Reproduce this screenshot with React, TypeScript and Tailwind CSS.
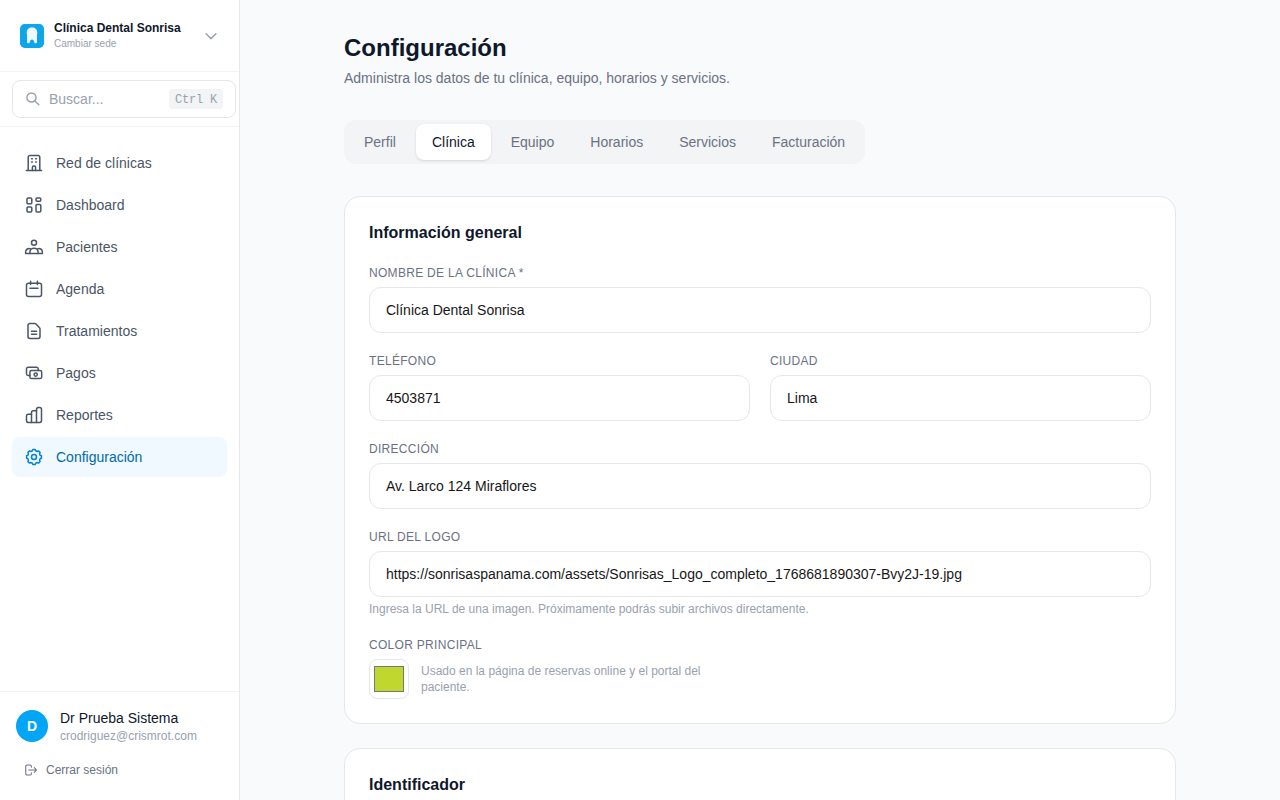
import React from "react";

type IconProps = { className?: string; children: React.ReactNode };

const Icon: React.FC<IconProps> = ({ className = "w-5 h-5", children }) => (
  <svg
    className={`${className} shrink-0`}
    viewBox="0 0 20 20"
    fill="none"
    stroke="currentColor"
    strokeWidth="1.5"
    strokeLinecap="round"
    strokeLinejoin="round"
  >
    {children}
  </svg>
);

const navItems = [
  {
    label: "Red de clínicas",
    icon: (
      <>
        <path d="M2.4 17.4h15.2M4.2 17.4V4.2a1.7 1.7 0 0 1 1.7-1.7h8.2a1.7 1.7 0 0 1 1.7 1.7v13.2" />
        <path d="M8.4 17.4v-3c0-.8.5-1.3 1.2-1.3h.8c.7 0 1.2.5 1.2 1.3v3" />
        <path d="M7.6 5.7h.8M11.6 5.7h.8M7.6 9.1h.8M11.6 9.1h.8" />
      </>
    ),
  },
  {
    label: "Dashboard",
    icon: (
      <>
        <rect x="3" y="2.9" width="4.8" height="5.9" rx="1.1" />
        <rect x="12" y="2.9" width="4.8" height="3.3" rx="1.1" />
        <rect x="3" y="12" width="4.8" height="4.9" rx="1.1" />
        <rect x="12" y="9.5" width="4.8" height="7.4" rx="1.1" />
      </>
    ),
  },
  {
    label: "Pacientes",
    icon: (
      <>
        <circle cx="10" cy="5.7" r="2.5" />
        <path d="M5.9 16.6v-1.3a4.1 4.1 0 0 1 8.2 0v1.3" />
        <path d="M6.6 11.9a3.4 3.4 0 0 0-5 3v1.7h16.8v-1.7a3.4 3.4 0 0 0-5-3" />
      </>
    ),
  },
  {
    label: "Agenda",
    icon: (
      <>
        <rect x="2.5" y="4.2" width="15" height="13.3" rx="2" />
        <path d="M6.6 2.3v3.2M13.4 2.3v3.2M6 9.3h8" />
      </>
    ),
  },
  {
    label: "Tratamientos",
    icon: (
      <>
        <path d="M4 4.4a1.9 1.9 0 0 1 1.9-1.9h4.8c.5 0 1 .2 1.3.6l3.5 3.6c.3.3.5.8.5 1.3v7.6a1.9 1.9 0 0 1-1.9 1.9H5.9A1.9 1.9 0 0 1 4 15.6z" />
        <path d="M7.5 10.3h5M7.5 13.3h5" />
      </>
    ),
  },
  {
    label: "Pagos",
    icon: (
      <>
        <rect x="5.9" y="7.5" width="11.8" height="8.1" rx="1.7" />
        <path d="M5.9 12.5H4.2a1.7 1.7 0 0 1-1.7-1.7V5.9a1.7 1.7 0 0 1 1.7-1.7h8.3a1.7 1.7 0 0 1 1.7 1.7v1.6" />
        <circle cx="11.7" cy="11.6" r="1.6" />
      </>
    ),
  },
  {
    label: "Reportes",
    icon: (
      <>
        <path d="M7.5 17.4H4.3a1.8 1.8 0 0 1-1.8-1.8V11a1.8 1.8 0 0 1 1.8-1.8h3.2" />
        <path d="M12.5 17.4h-5V7.6a1.8 1.8 0 0 1 1.8-1.8h3.2" />
        <path d="M12.5 17.4v-13a1.8 1.8 0 0 1 1.8-1.8h1.4a1.8 1.8 0 0 1 1.8 1.8v11.2a1.8 1.8 0 0 1-1.8 1.8z" />
      </>
    ),
  },
  {
    label: "Configuración",
    active: true,
    icon: (
      <>
        <path d="M8.8 2.6h2.4l.45 1.2 1.55.65 1.25-.55 1.65 1.65-.55 1.25.65 1.55 1.2.45v2.4l-1.2.45-.65 1.55.55 1.25-1.65 1.65-1.25-.55-1.55.65-.45 1.2H8.8l-.45-1.2-1.55-.65-1.25.55-1.65-1.65.55-1.25-.65-1.55-1.2-.45V8.8l1.2-.45.65-1.55-.55-1.25L5.55 3.9l1.25.55 1.55-.65z" />
        <circle cx="10" cy="10" r="2.5" />
      </>
    ),
  },
];

const tabs = ["Perfil", "Clínica", "Equipo", "Horarios", "Servicios", "Facturación"];

const Sidebar: React.FC = () => (
  <aside className="flex flex-col w-60 h-full bg-white border-r border-gray-200 shrink-0">
    <div className="flex items-center h-[72px] gap-2.5 px-5 border-b border-gray-100">
      <svg className="w-6 h-6 shrink-0" viewBox="0 0 24 24">
        <rect width="24" height="24" rx="4.8" fill="#0ea5e9" />
        <path
          d="M12 3.6c-3.1 0-5.300 2.100-5.300 4.900 0 1.500.4 2.200.4 3.700l-.1 5.200c0 1.200.5 1.900 1.300 1.900.9 0 1.200-.6 1.600-1.600.5-1.300.9-2.200 2.100-2.200s1.600.9 2.100 2.200c.4 1 .7 1.600 1.600 1.600.8 0 1.300-.7 1.300-1.900l-.1-5.200c0-1.500.4-2.200.4-3.700 0-2.800-2.200-4.900-5.300-4.900z"
          fill="#f0f9ff"
        />
      </svg>
      <div className="flex-1 min-w-0 pt-px">
        <p className="text-xs font-bold leading-[15px] text-slate-900 whitespace-nowrap">Clínica Dental Sonrisa</p>
        <p className="text-[10px] leading-[15px] text-gray-400">Cambiar sede</p>
      </div>
      <Icon className="w-4 h-4 text-gray-400 stroke-[1.8]">
        <path d="M3.8 7.3l6.2 6 6.2-6" />
      </Icon>
    </div>

    <div className="px-3 py-2 border-b border-gray-100">
      <button className="flex items-center w-56 h-[38px] gap-2 px-3 border border-gray-200 rounded-lg text-sm text-gray-400">
        <Icon className="w-4 h-4 stroke-[1.8]">
          <circle cx="8.1" cy="8.1" r="5.7" />
          <path d="M12.4 12.4l4.9 4.9" />
        </Icon>
        <span className="flex-1 text-left">Buscar...</span>
        <kbd className="px-1.5 pt-[3px] pb-px text-xs tracking-[-0.2px] rounded bg-gray-100 font-['Liberation_Mono',monospace]">
          Ctrl K
        </kbd>
      </button>
    </div>

    <nav className="flex flex-col flex-1 gap-0.5 px-3 py-4">
      {navItems.map((item) => (
        <a
          key={item.label}
          href="#"
          className={
            item.active
              ? "flex items-center h-10 gap-3 px-3 text-sm rounded-lg bg-sky-50 text-sky-700"
              : "flex items-center h-10 gap-3 px-3 text-sm rounded-lg text-gray-600"
          }
        >
          <Icon className={item.active ? "w-5 h-5 text-sky-600" : "w-5 h-5"}>{item.icon}</Icon>
          {item.label}
        </a>
      ))}
    </nav>

    <div className="p-4 border-t border-gray-100">
      <div className="flex items-center gap-3">
        <div className="flex items-center justify-center w-8 h-8 text-sm font-bold text-white rounded-full bg-[#03a5f6]">
          D
        </div>
        <div>
          <p className="text-sm text-slate-900">Dr Prueba Sistema</p>
          <p className="text-xs text-gray-400">crodriguez@crismrot.com</p>
        </div>
      </div>
      <button className="flex items-center gap-2 px-2 py-1.5 mt-3 text-xs text-gray-500">
        <Icon className="w-3.5 h-3.5">
          <path d="M10.5 6.2V4.8a2 2 0 0 0-2-2h-4a2 2 0 0 0-2 2v10.4a2 2 0 0 0 2 2h4a2 2 0 0 0 2-2v-1.4" />
          <path d="M6.8 10h11M14.6 6.6L18 10l-3.4 3.4" />
        </Icon>
        Cerrar sesión
      </button>
    </div>
  </aside>
);

type FieldProps = { label: string; value: string; hint?: string };

const Field: React.FC<FieldProps> = ({ label, value, hint }) => (
  <div>
    <label className="block mb-1.5 text-xs tracking-wide text-gray-500 uppercase">{label}</label>
    <input
      className="block w-full px-4 h-[46px] text-sm bg-white border border-gray-200 rounded-xl text-[#171717]"
      defaultValue={value}
    />
    {hint && <p className="mt-1 text-xs text-gray-400">{hint}</p>}
  </div>
);

const App: React.FC = () => {
  return (
    <div className="flex h-screen overflow-hidden bg-[#f9fafc] font-['Liberation_Sans',sans-serif]">
      <Sidebar />
      <main className="flex-1 overflow-hidden">
        <div className="max-w-4xl px-8 py-8 mx-auto">
          <h1 className="text-2xl font-bold text-slate-900">Configuración</h1>
          <p className="mt-1 text-sm text-gray-500">
            Administra los datos de tu clínica, equipo, horarios y servicios.
          </p>

          <div className="flex gap-1 p-1 mt-8 bg-gray-100 w-fit rounded-xl">
            {tabs.map((tab) => (
              <button
                key={tab}
                className={
                  tab === "Clínica"
                    ? "px-4 py-2 text-sm bg-white rounded-lg shadow-sm text-slate-900"
                    : "px-4 py-2 text-sm rounded-lg text-gray-500"
                }
              >
                {tab}
              </button>
            ))}
          </div>

          <section className="flex flex-col gap-5 p-6 mt-8 bg-white border border-gray-200 rounded-2xl">
            <h2 className="text-base font-bold text-slate-900">Información general</h2>
            <Field label="Nombre de la clínica *" value="Clínica Dental Sonrisa" />
            <div className="grid grid-cols-2 gap-5">
              <Field label="Teléfono" value="4503871" />
              <Field label="Ciudad" value="Lima" />
            </div>
            <Field label="Dirección" value="Av. Larco 124 Miraflores" />
            <Field
              label="URL del logo"
              value="https://sonrisaspanama.com/assets/Sonrisas_Logo_completo_1768681890307-Bvy2J-19.jpg"
              hint="Ingresa la URL de una imagen. Próximamente podrás subir archivos directamente."
            />
            <div>
              <label className="block mb-1.5 text-xs tracking-wide text-gray-500 uppercase">Color principal</label>
              <div className="flex items-center gap-3">
                <input
                  type="color"
                  defaultValue="#c0d72f"
                  className="w-10 h-10 p-0.5 bg-white border border-gray-200 rounded-lg"
                />
                <p className="w-[300px] text-xs text-gray-400">
                  Usado en la página de reservas online y el portal del paciente.
                </p>
              </div>
            </div>
          </section>

          <section className="p-6 mt-6 bg-white border border-gray-200 rounded-2xl">
            <h2 className="text-base font-bold text-slate-900">Identificador</h2>
          </section>
        </div>
      </main>
    </div>
  );
};

export default App;
